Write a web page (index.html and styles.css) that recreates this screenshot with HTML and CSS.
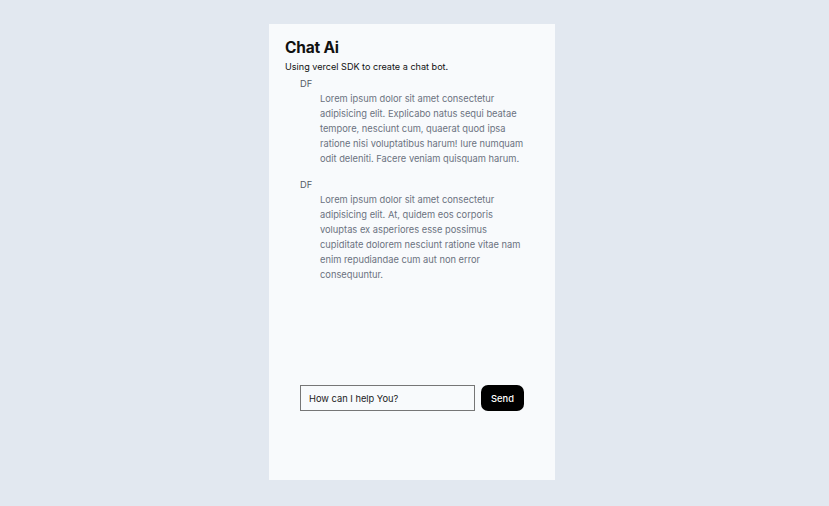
FILE: index.html
```html
<!DOCTYPE html>
<html>
<head>
<meta charset="utf-8">
<link rel="stylesheet" href="styles.css">
</head>
<body>
<main class="card">
  <h1 class="title">Chat Ai</h1>
  <p class="subtitle">Using vercel SDK to create a chat bot.</p>
  <div class="messages">
    <div class="message">
      <div class="author">DF</div>
      <p class="text">Lorem ipsum dolor sit amet consectetur adipisicing elit. Explicabo natus sequi beatae tempore, nesciunt cum, quaerat quod ipsa ratione nisi voluptatibus harum! Iure numquam odit deleniti. Facere veniam quisquam harum.</p>
    </div>
    <div class="message">
      <div class="author">DF</div>
      <p class="text">Lorem ipsum dolor sit amet consectetur adipisicing elit. At, quidem eos corporis voluptas ex asperiores esse possimus cupiditate dolorem nesciunt ratione vitae nam enim repudiandae cum aut non error consequuntur.</p>
    </div>
  </div>
  <form class="composer">
    <input class="field" type="text" value="How can I help You?">
    <button class="send" type="button">Send</button>
  </form>
</main>
</body>
</html>
```
FILE: styles.css
```css
html, body {
  margin: 0;
  padding: 0;
}
body {
  background: #e2e8f0;
  font-family: Inter, "Noto Sans", sans-serif;
  color: #111;
  display: flex;
  justify-content: center;
  padding-top: 24px;
}
.card {
  width: 286px;
  height: 456px;
  box-sizing: border-box;
  background: #f8fafc;
  padding: 13px 16px 0 16px;
  display: flex;
  flex-direction: column;
  margin-right: 5px;
}
.title {
  margin: 0;
  font-size: 15.5px;
  font-weight: 700;
  line-height: 22px;
  letter-spacing: -0.2px;
}
.subtitle {
  margin: 1px 0 0 0;
  font-size: 9.1px;
  line-height: 13px;
  color: #111;
}
.messages {
  margin-left: 15px;
  display: flex;
  flex-direction: column;
  gap: 10px;
  margin-top: 2px;
}
.author {
  padding-top: 2px;
  font-size: 9.3px;
  line-height: 14px;
  color: #555b66;
}
.text {
  margin: 0 0 0 20px;
  font-size: 9.3px;
  line-height: 15px;
  color: #6b7280;
  width: 205px;
}
.composer {
  margin: auto 0 69px 15px;
  display: flex;
  gap: 6px;
  align-items: center;
}
.field {
  width: 175px;
  height: 26px;
  box-sizing: border-box;
  border: 1px solid #767676;
  background: #f8fafc;
  padding: 0 8px;
  font-family: Inter, "Noto Sans", sans-serif;
  font-size: 9.3px;
  color: #222;
  outline: none;
}
.send {
  width: 43px;
  height: 26px;
  border: none;
  border-radius: 7px;
  background: #000;
  color: #fff;
  font-family: Inter, "Noto Sans", sans-serif;
  font-size: 9.3px;
  font-weight: 500;
  padding: 0;
}
```
